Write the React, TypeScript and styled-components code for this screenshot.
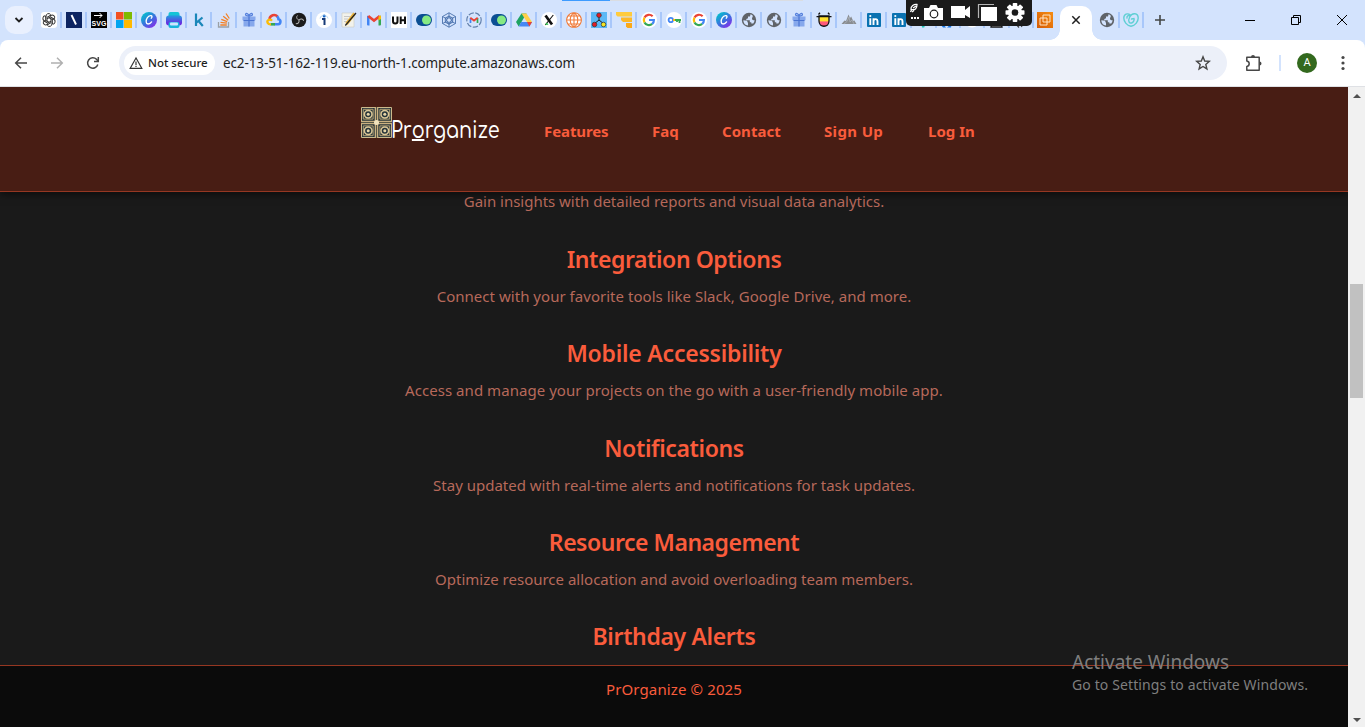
import React from "react";
import styled, { createGlobalStyle } from "styled-components";

const GlobalStyle = createGlobalStyle`
  * { box-sizing: border-box; }
  html, body { margin: 0; padding: 0; overflow: hidden; background: #1a1a1a; }
  body { font-family: "Noto Sans", "Open Sans", sans-serif; }
  svg { display: block; flex: none; }
`;

const Window = styled.div`
  position: relative;
  width: 1365px;
  height: 727px;
  display: flex;
  flex-direction: column;
  overflow: hidden;
`;

/* ---------- browser chrome ---------- */

const TabStrip = styled.div`
  height: 40px;
  flex: none;
  display: flex;
  align-items: center;
  background: #d3e3fd;
`;

const TabSearch = styled.div`
  width: 28px;
  height: 28px;
  margin: 0 8px 0 5px;
  border-radius: 10px;
  background: #e9f0fe;
  display: flex;
  align-items: center;
  justify-content: center;
`;

const Tab = styled.div<{ $w?: number }>`
  width: ${(p) => p.$w ?? 25}px;
  flex: none;
  display: flex;
  align-items: center;
  gap: 3px;
`;

const Divider = styled.span`
  width: 2px;
  height: 16px;
  flex: none;
  background: #a8c7fa;
`;

const ActiveTab = styled.div`
  width: 32px;
  height: 34px;
  margin: 6px 7px 0 7px;
  flex: none;
  position: relative;
  border-radius: 10px 10px 0 0;
  background: #fff;
  display: flex;
  align-items: center;
  justify-content: center;
  padding-bottom: 6px;
  &::before,
  &::after {
    content: "";
    position: absolute;
    bottom: 0;
    width: 10px;
    height: 10px;
  }
  &::before {
    left: -10px;
    background: radial-gradient(circle at 0 0, transparent 9.5px, #fff 10px);
  }
  &::after {
    right: -10px;
    background: radial-gradient(circle at 100% 0, transparent 9.5px, #fff 10px);
  }
`;

const NewTab = styled.div`
  padding-left: 1px;
`;

const WindowButtons = styled.div`
  margin-left: auto;
  padding-right: 18px;
  display: flex;
  align-items: center;
  gap: 36px;
`;

const ToolbarBack = styled.div`
  height: 47px;
  flex: none;
  background: #d3e3fd;
`;

const Toolbar = styled.div`
  height: 47px;
  display: flex;
  align-items: center;
  padding: 0 16px 0 13px;
  border-radius: 8px 8px 0 0;
  border-bottom: 1px solid #dfe1e5;
  background: #fff;
`;

const NavButtons = styled.div`
  display: flex;
  gap: 20px;
  width: 106px;
  flex: none;
`;

const AddressBar = styled.div`
  width: 1108px;
  height: 34px;
  flex: none;
  display: flex;
  align-items: center;
  padding: 0 16px 0 5px;
  border-radius: 17px;
  background: #ecf0f9;
`;

const SecurityChip = styled.div`
  width: 91px;
  height: 24px;
  flex: none;
  display: flex;
  align-items: center;
  gap: 5px;
  padding: 0 0 1px 5px;
  border-radius: 12px;
  background: #fff;
  color: #1f1f1f;
  font-size: 11.5px;
  font-weight: 500;
  white-space: nowrap;
`;

const Url = styled.span`
  flex: 1;
  padding-left: 8px;
  color: #1f1f1f;
  font-size: 13.5px;
  letter-spacing: -0.11px;
  white-space: nowrap;
`;

const ToolbarActions = styled.div`
  margin-left: auto;
  display: flex;
  align-items: center;
`;

const ToolbarDivider = styled.span`
  width: 2px;
  height: 16px;
  margin: 0 16px 0 17px;
  background: #d3e3fd;
`;

const Avatar = styled.div`
  width: 20px;
  height: 20px;
  margin-right: 16px;
  border-radius: 50%;
  background: #33691e;
  color: #fff;
  font: 11px/20px Roboto, sans-serif;
  text-align: center;
`;

const LoadStrip = styled.div`
  position: absolute;
  top: 0;
  left: 562px;
  width: 241px;
  height: 1px;
  background: linear-gradient(90deg, #3d9bff 48px, #dadde2 48px);
`;

const CaptureBar = styled.div`
  position: absolute;
  top: 0;
  left: 906px;
  width: 126px;
  height: 26px;
  border-radius: 0 0 5px 5px;
  background: #1b1b1b;
`;

/* ---------- web page ---------- */

const Viewport = styled.div`
  flex: 1;
  min-height: 0;
  display: flex;
`;

const Page = styled.div`
  flex: 1;
  display: flex;
  flex-direction: column;
  overflow: hidden;
  background: #1a1a1a;
`;

const Header = styled.header`
  position: relative;
  z-index: 1;
  height: 105px;
  flex: none;
  display: flex;
  padding: 20px 0 0 361px;
  background: #481d14;
  border-bottom: 1px solid #963722;
  box-shadow: 0 2px 8px rgba(0, 0, 0, 0.6);
`;

const Brand = styled.div`
  width: 183px;
  display: flex;
`;

const BrandName = styled.span`
  margin: 7px 0 0 -1px;
  color: #fff;
  font: 500 23px/33px Comfortaa, "Open Sans", sans-serif;
  transform: scaleX(0.835);
  transform-origin: 0 0;
`;

const UnderlinedLetter = styled.span`
  display: inline-block;
  height: 27px;
  border-bottom: 2px solid #fff;
`;

const Nav = styled.nav`
  display: flex;
  padding-top: 13px;
`;

const NavLink = styled.a<{ $w: number; $ls?: number }>`
  width: ${(p) => p.$w}px;
  color: #f95c3c;
  font-size: 15px;
  line-height: 22px;
  font-weight: 700;
  letter-spacing: ${(p) => p.$ls ?? 0}px;
  white-space: nowrap;
`;

const Content = styled.main`
  height: 473px;
  flex: none;
  overflow: hidden;
  text-align: center;
`;

const Feature = styled.section`
  height: 94.33px;
  &:first-child {
    height: 54px;
    margin-top: -3px;
  }
`;

const FeatureTitle = styled.h3<{ $ls: number }>`
  margin: 0 0 9px;
  color: #fa5c3c;
  font-size: 23px;
  line-height: 32px;
  font-weight: 600;
  letter-spacing: ${(p) => p.$ls}px;
`;

const FeatureText = styled.p<{ $ls: number }>`
  margin: 0;
  color: #b7695a;
  font-size: 15px;
  line-height: 24px;
  letter-spacing: ${(p) => p.$ls}px;
`;

const Footer = styled.footer`
  flex: 1;
  padding-top: 11px;
  border-top: 1px solid #963722;
  background: #0b0b0b;
  color: #f95c3c;
  font-size: 15px;
  line-height: 24px;
  letter-spacing: 0.12px;
  text-align: center;
`;

const Scrollbar = styled.div`
  width: 17px;
  flex: none;
  display: flex;
  flex-direction: column;
  align-items: center;
  padding: 7px 0 5px;
  background: #f1f1f1;
`;

const Thumb = styled.div`
  width: 13px;
  height: 114px;
  margin: 186px 0 auto;
  background: #c1c1c1;
`;

const Watermark = styled.div`
  position: absolute;
  left: 1072px;
  top: 649px;
  z-index: 2;
  color: #7f7f7f;
  white-space: nowrap;
`;

const WatermarkTitle = styled.div`
  font-size: 19px;
  line-height: 26px;
`;

const WatermarkText = styled.div`
  font-size: 14px;
  line-height: 20px;
  letter-spacing: 0.12px;
`;

/* ---------- icons ---------- */

const Ico = ({ children }: { children: React.ReactNode }) => (
  <svg width="16" height="16" viewBox="0 0 16 16" fill="none">
    {children}
  </svg>
);

const Knot = () => (
  <Ico>
    <rect width="16" height="16" rx="3" fill="#fff" />
    <g stroke="#333" strokeWidth="1">
      {[0, 60, 120, 180, 240, 300].map((a) => (
        <path key={a} transform={`rotate(${a} 8 8)`} d="M5 5.5V4.2a2.6 2.6 0 0 1 4.6-1.7M6 9V5.3l4-2.3" />
      ))}
    </g>
  </Ico>
);
const Navy = () => (
  <Ico>
    <rect width="16" height="16" fill="#0c2461" />
    <path d="M5.5 3l4.5 9.500" stroke="#fff" strokeWidth="1.900" />
  </Ico>
);
const IconText = styled.text`
  font: 700 7px "Liberation Sans", sans-serif;
`;
const SvgIcon = () => (
  <svg width="16" height="16" viewBox="0 0 16 16" fill="none" overflow="visible">
    <rect width="16" height="16" fill="#000" />
    <path d="M3 3.500h8M8.500 1L11 3.500 8.500 6" stroke="#fff" />
    <IconText x="8" y="13.700" textAnchor="middle" fill="#fff">SVG</IconText>
  </svg>
);
const Microsoft = () => (
  <Ico>
    <path fill="#f25022" d="M0 0h7.500v7.500H0z" />
    <path fill="#7fba00" d="M8 0h8v7.500H8z" />
    <path fill="#00a4ef" d="M0 8h7.500v8H0z" />
    <path fill="#ffb900" d="M8 8h8v8H8z" />
  </Ico>
);
const Gradients = () => (
  <svg width="0" height="0" style={{ position: "absolute" }}>
    <defs>
      <linearGradient id="canva" x1="0" y1="0" x2="0.8" y2="1">
        <stop offset="0.1" stopColor="#00c4cc" />
        <stop offset="0.6" stopColor="#3f6be0" />
        <stop offset="1" stopColor="#8b2be8" />
      </linearGradient>
      <linearGradient id="printer" x1="0" y1="0" x2="0" y2="1">
        <stop offset="0.1" stopColor="#2b8fe0" />
        <stop offset="0.8" stopColor="#6a2be0" />
      </linearGradient>
      <linearGradient id="tongue" x1="0" y1="0" x2="0" y2="1">
        <stop offset="0.45" stopColor="#ffe02e" />
        <stop offset="0.6" stopColor="#ff5a7a" />
      </linearGradient>
      <linearGradient id="aws" x1="0" y1="1" x2="1" y2="0">
        <stop offset="0" stopColor="#d45b07" />
        <stop offset="1" stopColor="#f68d11" />
      </linearGradient>
    </defs>
  </svg>
);
const Canva = () => (
  <Ico>
    <circle cx="8" cy="8" r="8" fill="url(#canva)" />
    <path d="M10.200 6.200c1.300-1 1-2.700-.6-2.500C6.700 4 5 7.200 5.200 9.700c.2 3 3.500 3 5.400.2" stroke="#fff" strokeWidth="1.300" strokeLinecap="round" />
  </Ico>
);
const Printer = () => (
  <Ico>
    <rect x="2.500" y="0" width="11" height="8" rx="2" fill="#14c4d6" />
    <rect x="0" y="3.500" width="16" height="10" rx="3" fill="url(#printer)" />
    <rect x="2.500" y="10" width="11" height="6" rx="2" fill="#17b4dc" />
    <rect x="4" y="10.500" width="8" height="3" rx="1" fill="#cfe4ff" />
  </Ico>
);
const Kaggle = () => (
  <Ico>
    <path d="M5 1.500v12.500M11.500 5.500L5 11M7.500 9l4.300 5" stroke="#1a87b9" strokeWidth="2.200" />
  </Ico>
);
const StackOverflow = () => (
  <Ico>
    <path d="M2.500 10v5h10v-5" stroke="#9aa0a6" strokeWidth="1.300" />
    <path d="M4.300 13h6.500M4.500 10.300l6.400.9M5.300 7.300l5.900 2.400M7.200 4.300l5 4M10 1.500l3.300 5" stroke="#f48024" strokeWidth="1.300" />
  </Ico>
);
const Gift = () => (
  <Ico>
    <path d="M1.500 4.500h13v3.800h-13zM2.500 8.500h11V14.500h-11z" fill="#86a8ec" />
    <path d="M8 4C6 4 4 3.400 4.700 2S7.500 2 8 4c.5-2 2.600-3.400 3.300-2S10 4 8 4z" stroke="#5580dc" strokeWidth="1.300" />
    <path d="M8 4.500V14.500M2.500 8.500h11" stroke="#4a74d2" strokeWidth="1.200" />
  </Ico>
);
const Cloud = () => (
  <Ico>
    <path d="M3.500 7A4.700 4.700 0 0 1 11.500 4.500" stroke="#ea4335" strokeWidth="2.600" />
    <path d="M11 4.200c1.400 1.100 1.500 2 1.500 3 2.600.3 2.600 5-.3 5H8.500" stroke="#4285f4" strokeWidth="2.600" />
    <path d="M9 12.300H4.500" stroke="#34a853" strokeWidth="2.600" />
    <path d="M5 12.300C1.500 12.600.7 9.500 2 8.300s3-.8 4 .4" stroke="#fbbc05" strokeWidth="2.300" />
  </Ico>
);
const Obs = () => (
  <Ico>
    <circle cx="8" cy="8" r="7.300" fill="#1b1b1b" />
    {[0, 120, 240].map((a) => (
      <path key={a} transform={`rotate(${a} 8 8)`} d="M8 8c-2.400-.8-3-3-1.500-4.500" stroke="#b5b5b5" strokeWidth="1" />
    ))}
  </Ico>
);
const Info = () => (
  <Ico>
    <circle cx="8" cy="8" r="8" fill="#fff" />
    <circle cx="8.200" cy="4" r="1.500" fill="#1667c9" />
    <path d="M6 7h2.500v6" stroke="#173a77" strokeWidth="2" />
    <path d="M4 6.500C5 2 11 2 12 6.500" stroke="#9cc5ee" strokeWidth=".7" />
  </Ico>
);
const Memo = () => (
  <Ico>
    <path d="M1 1h12v14H1z" fill="#f2f2ec" stroke="#c9c9c0" strokeWidth=".6" />
    <path d="M3 4.500h6M3 7h4M3 9.500h3" stroke="#bbb" strokeWidth=".8" />
    <path d="M5.500 12L13.500 1.500" stroke="#e9b33c" strokeWidth="3" />
    <path d="M4.300 13.500L15 1" stroke="#222" strokeWidth="1.200" />
  </Ico>
);
const Gmail = () => (
  <Ico>
    <path d="M1 3.500l2.500 1.500v8.500H2q-1 0-1-1z" fill="#4285f4" />
    <path d="M15 3.500L12.500 5v8.500H14q1 0 1-1z" fill="#34a853" />
    <path d="M2.200 4L8 8.500 13.800 4" stroke="#ea4335" strokeWidth="2.700" />
    <path d="M12.500 4.500L15 3.500V7l-2.500 1.500z" fill="#fbbc04" />
  </Ico>
);
const Uh = () => (
  <Ico>
    <rect width="16" height="16" fill="#fff" />
    <path d="M2 4.500v4.700c0 3 4.500 3 4.500 0V4.500M9.700 4.500V12M14 4.500V12M9.700 8.200H14" stroke="#111" strokeWidth="2" />
  </Ico>
);
const Toggle = () => (
  <Ico>
    <rect x="0" y="2" width="16" height="12" rx="6" fill="#0b4f93" />
    <circle cx="10.500" cy="8" r="4.500" fill="#86ea83" />
  </Ico>
);
const Hex = () => (
  <Ico>
    <path d="M8 .8l6.500 3.700v7L8 15.200 1.500 11.500v-7zM8 4l3.700 2v4.200L8 12.300 4.300 10.200V6zM8 .8V4M14.500 4.500L11.700 6M14.500 11.500l-2.800-1.300M8 15.200v-3M1.500 11.500l2.800-1.300M1.500 4.500L4.300 6M4.300 10.200L8 4l3.700 6.200zM8 12.300L4.300 6h7.400z" stroke="#4a72ad" strokeWidth=".9" />
  </Ico>
);
const GmailRing = () => (
  <Ico>
    <circle cx="8" cy="8" r="7.200" stroke="#6482ad" strokeWidth="1.200" strokeDasharray="5.500 1.500" />
    <path d="M4.500 11V6" stroke="#4285f4" strokeWidth="1.700" />
    <path d="M11.500 11V6" stroke="#34a853" strokeWidth="1.700" />
    <path d="M4.300 5.700L8 8.500l3.700-2.800" stroke="#ea4335" strokeWidth="1.800" />
  </Ico>
);
const Drive = () => (
  <Ico>
    <path d="M5.500 1.500h5L5.300 10.300 2.700 14.500 0 10z" fill="#1ea362" />
    <path d="M5.500 1.500h5L16 10h-5z" fill="#ffcf48" />
    <path d="M5.200 10H16l-2.600 4.500H2.700z" fill="#4688f4" />
    <path d="M11 10h5l-2.600 4.500z" fill="#ea4335" />
  </Ico>
);
const XMark = () => (
  <Ico>
    <circle cx="8" cy="8" r="8" fill="#fff" />
    <path d="M4.500 3.500l6.500 9" stroke="#111" strokeWidth="2.700" />
    <path d="M12.300 3l-8 10" stroke="#111" strokeWidth="1.100" />
    <path d="M4 12.500l2-2 1.500 2.500z" fill="#2cc84d" />
  </Ico>
);
const WireGlobe = () => (
  <Ico>
    <circle cx="8" cy="8" r="7.300" fill="#fff" />
    <path d="M8 .7a7.300 7.300 0 1 0 .01 0M8 .7v14.600M.7 8h14.600M2 4h12M2 12h12M8 .7C3 4 3 12 8 15.300M8 .7c5 3.300 5 11.300 0 14.600" stroke="#f07b3a" strokeWidth="1.100" />
  </Ico>
);
const Tree = () => (
  <Ico>
    <rect width="16" height="16" fill="#5bb8f5" />
    <path d="M8 4v4.500M3 12l5-4 5 4" stroke="#222" />
    <circle cx="8" cy="3.200" r="2.300" fill="#e21d24" stroke="#333" strokeWidth=".7" />
    <circle cx="3.500" cy="12.500" r="2.300" fill="#e21d24" stroke="#333" strokeWidth=".7" />
    <circle cx="12.500" cy="12.500" r="2.300" fill="#f4e51e" stroke="#333" strokeWidth=".7" />
  </Ico>
);
const Funnel = () => (
  <Ico>
    <path d="M0 0h16v4.500H1.500L0 3z" fill="#ffcb3d" />
    <path d="M5 5.500h11v4.500H7L5 8z" fill="#fdb827" />
    <path d="M10 11h6v5h-4.500L10 14.500z" fill="#fba919" />
  </Ico>
);
const Google = () => (
  <Ico>
    <circle cx="8" cy="8" r="8" fill="#fff" />
    <path d="M3.500 5.600A5 5 0 0 1 11.600 4.300" stroke="#ea4335" strokeWidth="2.200" />
    <path d="M3.500 5.600a5 5 0 0 0 0 4.800" stroke="#fbbc05" strokeWidth="2.200" />
    <path d="M3.500 10.400a5 5 0 0 0 7.700 1.500" stroke="#34a853" strokeWidth="2.200" />
    <path d="M11.200 11.900A5 5 0 0 0 12.900 8H8" stroke="#4285f4" strokeWidth="2.200" />
  </Ico>
);
const KeyIcon = () => (
  <Ico>
    <circle cx="8" cy="8" r="8" fill="#fff" />
    <circle cx="4.800" cy="8" r="2.200" stroke="#4285f4" strokeWidth="1.800" />
    <path d="M7 8h2" stroke="#fbbc05" strokeWidth="1.800" />
    <path d="M9 8h6M13.500 8v3M11 8v2" stroke="#34a853" strokeWidth="1.800" />
  </Ico>
);
const Globe = () => (
  <Ico>
    <circle cx="8" cy="8" r="7.200" fill="#5f6368" />
    <path d="M9.500 2.300l-.5 2.200H7V6.300L5.300 7v1.300h3.500v2H10.300v1.200h2A5.700 5.700 0 0 0 13.600 8c-1.500.5-2.600 0-2.600-1.500 0-1 .8-1.200.8-2.800a5 5 0 0 0-2.300-1.400zM2.300 8.200L6 8.700l1 2.300v2.600a5.700 5.700 0 0 1-4.700-5.400z" fill="#d3e3fd" />
  </Ico>
);
const Tongue = () => (
  <Ico>
    <path d="M3 4h10v5c0 7-10 7-10 0z" fill="url(#tongue)" stroke="#111" strokeWidth="1.300" />
    <path d="M.5 4.700h15M2.500 2.500L4 .8M13.500 2.500L12 .8" stroke="#111" strokeWidth="1.300" />
  </Ico>
);
const Mountain = () => (
  <Ico>
    <path d="M.5 12l3-3.500L5 9l2.500-6.500L9 6l1.200-1.500 2 4.500 1-.7L15.500 12z" fill="#8a8d91" />
    <path d="M3 12l3-2.500L8 5l1 5 2-2 2 4" stroke="#aeb5bf" strokeWidth=".7" />
  </Ico>
);
const LinkedIn = () => (
  <Ico>
    <rect x="1" y="1" width="14" height="14" rx="1" fill="#0a72b1" />
    <path d="M4.300 6.300V13M7.500 6.300V13M7.500 9.500c0-3.200 4-3.200 4 0V13" stroke="#fff" strokeWidth="1.900" />
    <circle cx="4.300" cy="4" r="1.100" fill="#fff" />
  </Ico>
);
const TealDot = () => (
  <Ico><path d="M5.500 12h4l-1.300 3.500H6z" fill="#1fc5b5" /></Ico>
);
const BlueMark = () => (
  <Ico><path d="M1 13h3l2 2.500H3zM7 15.500L12 11l-1 4.500z" fill="#1677e8" /></Ico>
);
const WhiteDisc = () => (
  <Ico><circle cx="8" cy="8" r="7.500" fill="#fff" /></Ico>
);
const BoxMark = () => (
  <Ico><path d="M3 9h9l1 6H2z" fill="#fff" stroke="#111" strokeWidth="1.300" /></Ico>
);
const DarkMark = () => (
  <Ico><path d="M3 12l3 3.500M9 15l-2-3" stroke="#444" strokeWidth="1.300" /></Ico>
);
const Aws = () => (
  <Ico>
    <rect width="16" height="16" fill="url(#aws)" />
    <path d="M6 6V3h7v7h-3M6 6H3v7h7v-3M6 6h4v4H6z" stroke="#ffe4c4" strokeWidth="1" />
  </Ico>
);
const HeartLoop = () => (
  <Ico>
    <path d="M8 14.300C3.500 13.500.8 9.500.8 6 .8 2 4.500.8 7.500 3M8 14.300c4.500-.8 7.200-4.800 7.200-8.300 0-5-6-6-8.500-1C4.500 9.500 6.500 11.500 8.500 11S11.500 8 11 6.500L8.500 7M4 6c-.5-2 1.500-3 3-2" stroke="#5fcfd4" strokeWidth="1.400" strokeLinecap="round" />
  </Ico>
);

const tabs = [
  Knot, Navy, SvgIcon, Microsoft, Canva, Printer, Kaggle, StackOverflow, Gift, Cloud, Obs, Info, Memo, Gmail,
  Uh, Toggle, Hex, GmailRing, Toggle, Drive, XMark, WireGlobe, Tree, Funnel, Google, KeyIcon, Google, Canva,
  Globe, Globe, Gift, Tongue, Mountain, LinkedIn, LinkedIn,
];
const coveredTabs = [TealDot, BlueMark, WhiteDisc, BoxMark, DarkMark];

const CaptureTools = () => (
  <CaptureBar>
    <svg width="126" height="26" viewBox="0 0 126 26" fill="none">
      <path d="M4.500 12l1.500-3M5 9.500C4.500 6 8 4 11 4.500c0 3.500-1.500 6-6 5zM7 8l3-2M8 10.500l-2 1.500" stroke="#fff" strokeWidth="1.300" />
      <path d="M5 17h2v2H5zM8 17h2v2H8zM11 17h2v2h-2z" fill="#fff" />
      <path d="M18 8h5l1.500-3h6L32 8h5v12H18z" fill="#fff" />
      <circle cx="28" cy="14" r="3.800" stroke="#1b1b1b" strokeWidth="1.200" />
      <path d="M45 6h14v4l5-4v12l-5-3v3H45z" fill="#fff" />
      <path d="M72.500 18V4.500H88" stroke="#b5b5b5" strokeWidth="1.200" />
      <rect x="75" y="7" width="16" height="14" fill="#fff" />
      <g transform="translate(109 12.500)">
        {[0, 45, 90, 135].map((a) => (
          <rect key={a} x="-2.300" y="-9.500" width="4.600" height="19" rx=".8" fill="#fff" transform={`rotate(${a})`} />
        ))}
        <circle r="7" fill="#fff" />
        <circle r="3.300" fill="#1b1b1b" />
      </g>
    </svg>
  </CaptureBar>
);

const LogoMark = () => (
  <svg width="31" height="31" viewBox="0 0 31 31" fill="none">
    <rect width="31" height="31" fill="#26343a" />
    <path d="M.5 .5h30v30H.5z" stroke="#cbb98c" />
    <path d="M15.500 0v31M0 15.500h31" stroke="#c9b080" strokeWidth="3.600" />
    <path d="M15.500 0v31M0 15.500h31" stroke="#3a4038" strokeWidth=".8" />
    {[[7.2, 7.2], [23.8, 7.2], [7.2, 23.8], [23.8, 23.8]].map(([x, y]) => (
      <g key={`${x}-${y}`} transform={`translate(${x} ${y})`}>
        <path d="M-4.900 -4.900h9.800v9.800h-9.800z" stroke="#b5a275" strokeWidth="1" />
        <circle r="3.800" stroke="#dcc898" strokeWidth="1.500" />
        <circle r="1.500" fill="#e6d5a8" />
      </g>
    ))}
    <circle cx="15.500" cy="15.500" r="2.500" fill="#f1e3bd" />
  </svg>
);

const links = [
  { label: "Features", w: 108, ls: -0.1 },
  { label: "Faq", w: 70, ls: 0 },
  { label: "Contact", w: 102, ls: 0.05 },
  { label: "Sign Up", w: 104, ls: 0.35 },
  { label: "Log In", w: 60, ls: 0 },
];

const features = [
  { text: "Gain insights with detailed reports and visual data analytics.", tls: -0.02 },
  { title: "Integration Options", ls: -0.42, text: "Connect with your favorite tools like Slack, Google Drive, and more.", tls: 0.03 },
  { title: "Mobile Accessibility", ls: -0.22, text: "Access and manage your projects on the go with a user-friendly mobile app.", tls: 0.045 },
  { title: "Notifications", ls: -0.37, text: "Stay updated with real-time alerts and notifications for task updates.", tls: 0 },
  { title: "Resource Management", ls: -0.47, text: "Optimize resource allocation and avoid overloading team members.", tls: 0 },
  { title: "Birthday Alerts", ls: -0.35, text: "", tls: 0 },
];

export default function App() {
  return (
    <Window>
      <GlobalStyle />
      <Gradients />
      <TabStrip>
        <TabSearch>
          <svg width="10" height="10" viewBox="0 0 10 10" fill="none">
            <path d="M1.500 3L5 6.500 8.500 3" stroke="#1f1f1f" strokeWidth="1.800" />
          </svg>
        </TabSearch>
        {tabs.map((Icon, i) => (
          <Tab key={i}><Icon /><Divider /></Tab>
        ))}
        {coveredTabs.map((Icon, i) => (
          <Tab key={i} $w={24.2}><Icon /><Divider /></Tab>
        ))}
        <Tab $w={16}><Aws /></Tab>
        <ActiveTab>
          <svg width="10" height="10" viewBox="0 0 10 10" fill="none">
            <path d="M1.300 1.300l7.400 7.400M8.700 1.300L1.300 8.700" stroke="#1f1f1f" strokeWidth="1.500" />
          </svg>
        </ActiveTab>
        <Tab $w={24}><Globe /><Divider /></Tab>
        <Tab $w={30}><HeartLoop /><Divider /></Tab>
        <NewTab>
          <svg width="12" height="12" viewBox="0 0 12 12" fill="none">
            <path d="M6 1v10M1 6h10" stroke="#444746" strokeWidth="1.600" />
          </svg>
        </NewTab>
        <WindowButtons>
          <svg width="10" height="10" viewBox="0 0 10 10"><path d="M0 5.500h10" stroke="#000" /></svg>
          <svg width="10" height="10" viewBox="0 0 10 10" fill="none">
            <path d="M.5 2.500h7v7h-7zM2.500 2.500v-2h7v7h-2" stroke="#000" />
          </svg>
          <svg width="10" height="10" viewBox="0 0 10 10"><path d="M0 0l10 10M10 0L0 10" stroke="#000" /></svg>
        </WindowButtons>
      </TabStrip>

      <ToolbarBack>
        <Toolbar>
          <NavButtons>
            <Ico><path d="M14 8H3M8 2.700L2.700 8 8 13.300" stroke="#474747" strokeWidth="1.500" /></Ico>
            <Ico><path d="M2 8h11M8 2.700L13.300 8 8 13.300" stroke="#b0b0b0" strokeWidth="1.500" /></Ico>
            <Ico>
              <path d="M12.800 9.500A5.200 5.200 0 1 1 11.500 4.300l1.500 1.700" stroke="#474747" strokeWidth="1.500" />
              <path d="M13.300 2v4.500H9" stroke="#474747" strokeWidth="1.500" />
            </Ico>
          </NavButtons>
          <AddressBar>
            <SecurityChip>
              <svg width="14" height="14" viewBox="0 0 14 14" fill="none">
                <path d="M7 2L1.200 12.300h11.600zM7 5.500v3.500M7 9.800v1.300" stroke="#333" strokeWidth="1.200" />
              </svg>
              Not secure
            </SecurityChip>
            <Url>ec2-13-51-162-119.eu-north-1.compute.amazonaws.com</Url>
            <Ico>
              <path d="M8 1.800l1.700 4.200 4.600.4-3.500 3 1.100 4.500L8 11.500l-3.900 2.400 1.100-4.500-3.500-3L6.300 6z" stroke="#474747" strokeWidth="1.400" />
            </Ico>
          </AddressBar>
          <ToolbarActions>
            <svg width="17" height="18" viewBox="0 0 17 18" fill="none">
              <path d="M1.800 3.300h12.400v12.900H1.800v-3.700c3.200-.5 3.200-5 0-5.500z" stroke="#474747" strokeWidth="1.500" strokeLinejoin="round" />
              <path d="M6 3a2 2 0 0 1 4 0zM14.500 7.500a2 2 0 0 1 0 4z" fill="#474747" />
            </svg>
            <ToolbarDivider />
            <Avatar>A</Avatar>
            <svg width="16" height="16" viewBox="0 0 16 16" fill="#474747">
              <circle cx="10" cy="2.500" r="1.600" /><circle cx="10" cy="8" r="1.600" /><circle cx="10" cy="13.500" r="1.600" />
            </svg>
          </ToolbarActions>
        </Toolbar>
      </ToolbarBack>

      <Viewport>
        <Page>
          <Header>
            <Brand>
              <LogoMark />
              <BrandName>Pr<UnderlinedLetter>o</UnderlinedLetter>rganize</BrandName>
            </Brand>
            <Nav>
              {links.map((l) => (
                <NavLink key={l.label} $w={l.w} $ls={l.ls}>{l.label}</NavLink>
              ))}
            </Nav>
          </Header>
          <Content>
            {features.map((f) => (
              <Feature key={f.title ?? "intro"}>
                {f.title && <FeatureTitle $ls={f.ls ?? 0}>{f.title}</FeatureTitle>}
                {f.text && <FeatureText $ls={f.tls}>{f.text}</FeatureText>}
              </Feature>
            ))}
          </Content>
          <Footer>PrOrganize © 2025</Footer>
        </Page>
        <Scrollbar>
          <svg width="8" height="4" viewBox="0 0 8 4"><path d="M0 4l4-4 4 4z" fill="#505050" /></svg>
          <Thumb />
          <svg width="8" height="4" viewBox="0 0 8 4"><path d="M0 0l4 4 4-4z" fill="#505050" /></svg>
        </Scrollbar>
      </Viewport>

      <LoadStrip />
      <CaptureTools />
      <Watermark>
        <WatermarkTitle>Activate Windows</WatermarkTitle>
        <WatermarkText>Go to Settings to activate Windows.</WatermarkText>
      </Watermark>
    </Window>
  );
}
